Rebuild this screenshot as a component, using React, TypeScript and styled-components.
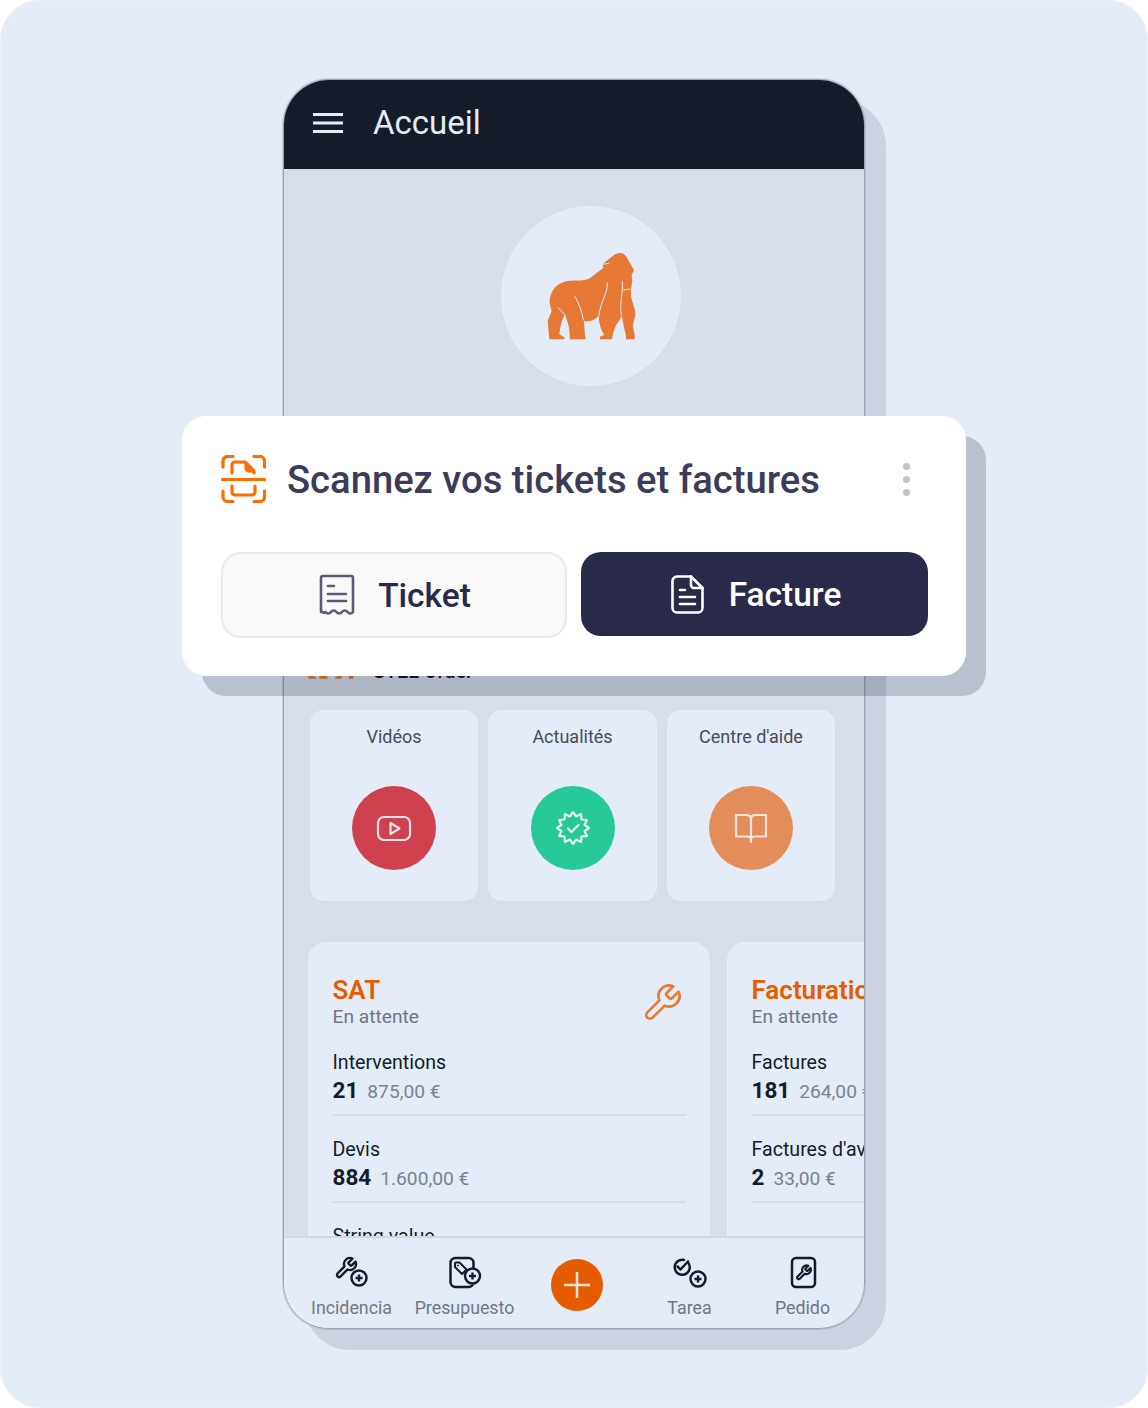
import React from "react";
import styled, { createGlobalStyle } from "styled-components";

const Global = createGlobalStyle`
  html, body { margin: 0; padding: 0; background: #ffffff; }
  * { box-sizing: border-box; }
  body { font-family: Roboto, "Liberation Sans", sans-serif; }
`;

const Canvas = styled.div`
  position: relative;
  width: 1148px;
  height: 1408px;
  padding: 79px 0 0 283px;
  background: #e4ecf7;
  border-radius: 40px;
  box-shadow: inset 0 0 0 1px #edf0f4;
  overflow: hidden;
`;

const Phone = styled.div`
  display: flex;
  flex-direction: column;
  width: 582px;
  height: 1250px;
  background: #d7dee9;
  border: 1px solid #9ca4b3;
  border-radius: 46px;
  box-shadow: 0 0 0 1px rgba(156, 164, 179, 0.4), 21px 21px 0 0 #cbd3e0;
  overflow: hidden;
`;

const Header = styled.header`
  flex: none;
  display: flex;
  align-items: center;
  gap: 30px;
  height: 89px;
  padding: 0 0 4px 29px;
  background: #151c29;
  color: #e4ecf7;
  font-size: 33px;
`;

const Body = styled.main`
  flex: 1;
  min-height: 0;
  padding-top: 37px;
  overflow: hidden;
`;

const Avatar = styled.div`
  display: flex;
  align-items: center;
  justify-content: center;
  width: 180px;
  height: 180px;
  margin-left: 217px;
  border-radius: 50%;
  background: #e4ecf7;
`;

const BrandRow = styled.div`
  display: flex;
  align-items: flex-end;
  gap: 11px;
  height: 60px;
  margin-top: 236px;
  padding-left: 15px;
  font-size: 19.8px;
  font-weight: 500;
  color: #10151f;
  line-height: 1;
`;

const BrandMark = styled.div`
  margin-bottom: -7px;
`;

const BrandName = styled.span`
  margin-bottom: 0;
`;

const Tiles = styled.div`
  display: grid;
  grid-template-columns: 168px 169px 168px;
  gap: 10px;
  margin: 28px 0 0 26px;
`;

const Tile = styled.div`
  display: flex;
  flex-direction: column;
  align-items: center;
  height: 191px;
  padding-top: 16px;
  background: #e4ecf7;
  border-radius: 14px;
  color: #454c5a;
  font-size: 18px;
  line-height: 22px;
`;

const TileCircle = styled.div<{ $color: string }>`
  display: flex;
  align-items: center;
  justify-content: center;
  width: 84px;
  height: 84px;
  margin-top: 38px;
  border-radius: 50%;
  background: ${(p) => p.$color};
`;

const Cards = styled.div`
  display: flex;
  gap: 17px;
  margin: 41px 0 0 24px;
`;

const Card = styled.section`
  flex: none;
  width: 402px;
  height: 400px;
  padding: 33px 24px 0 24.5px;
  background: #e4ecf7;
  border-radius: 18px;
`;

const CardTop = styled.div`
  display: flex;
  justify-content: space-between;
  height: 53px;
  padding-right: 3px;
`;

const CardIcon = styled.div`
  margin-top: 7px;
`;

const CardTitle = styled.div`
  color: #e55c00;
  font-size: 26px;
  font-weight: 600;
  line-height: 30px;
`;

const CardSub = styled.div`
  margin-top: 1px;
  color: #6f7785;
  font-size: 19.2px;
  line-height: 22px;
`;

const MetricList = styled.div`
  margin-top: 1px;
`;

const Metric = styled.div`
  height: 87px;
  padding-top: 22px;
  border-bottom: 2px solid #d7dee9;
`;

const MetricName = styled.div`
  color: #151c29;
  font-size: 19.6px;
  font-weight: 450;
  line-height: 24px;
`;

const MetricValues = styled.div`
  display: flex;
  align-items: baseline;
  gap: 9px;
  margin-top: 0;
`;

const Count = styled.span`
  color: #151c29;
  font-size: 22.5px;
  font-weight: 700;
  line-height: 30px;
`;

const Amount = styled.span`
  color: #7b8391;
  font-size: 19.2px;
  line-height: 24px;
  white-space: nowrap;
`;

const Nav = styled.nav`
  flex: none;
  display: grid;
  grid-template-columns: 113px 113px 112px 113px 113px;
  align-items: start;
  height: 92px;
  padding-left: 11px;
  background: #e4ecf7;
  border-top: 2px solid #d0d8e4;
`;

const NavItem = styled.div`
  display: flex;
  flex-direction: column;
  align-items: center;
  padding-top: 18px;
  color: #6f7785;
  font-size: 17.8px;
  line-height: 22px;
  white-space: nowrap;
`;

const NavIcon = styled.div`
  height: 33px;
  margin-bottom: 8px;
`;

const AddButton = styled.div`
  display: flex;
  align-items: center;
  justify-content: center;
  width: 52px;
  height: 52px;
  margin: 21px 0 0 30px;
  border-radius: 50%;
  background: #e55c00;
`;

const Overlay = styled.section`
  position: absolute;
  left: 182px;
  top: 416px;
  width: 784px;
  height: 260px;
  padding: 39px 38px 0 39px;
  background: #ffffff;
  border-radius: 24px;
  box-shadow: 20px 20px 0 rgba(16, 26, 48, 0.2);
`;

const OverlayHead = styled.div`
  display: flex;
  align-items: center;
  gap: 21px;
  height: 48px;
`;

const OverlayTitle = styled.h2`
  flex: 1;
  margin: 0;
  padding-top: 1px;
  color: #3c3c5a;
  font-size: 38.2px;
  font-weight: 500;
  line-height: 48px;
  white-space: nowrap;
`;

const Dots = styled.div`
  display: flex;
  flex-direction: column;
  gap: 6px;
  margin-right: 18px;
`;

const Dot = styled.span`
  width: 7px;
  height: 7px;
  border-radius: 50%;
  background: #c4c4c4;
`;

const Buttons = styled.div`
  display: grid;
  grid-template-columns: 346px 347px;
  gap: 14px;
  margin-top: 49px;
`;

const ActionButton = styled.div<{ $primary?: boolean }>`
  display: flex;
  align-items: center;
  justify-content: center;
  gap: ${(p) => (p.$primary ? "25px" : "23px")};
  height: ${(p) => (p.$primary ? "84px" : "86px")};
  padding-left: ${(p) => (p.$primary ? "3px" : "2px")};
  background: ${(p) => (p.$primary ? "#29294a" : "#f9f9f9")};
  border: ${(p) => (p.$primary ? "none" : "2px solid #e8e8ee")};
  border-radius: 20px;
  color: ${(p) => (p.$primary ? "#ffffff" : "#29294a")};
  font-size: 33.5px;
  font-weight: 500;
`;

const Gorilla = ({ width, height }: { width: number; height: number }) => (
  <svg width={width} height={height} viewBox="3 3 360 330" aria-hidden>
    <path
      fill="#e57935"
      d="M218 72 L248 48 C258 40 272 35 282 43 C292 52 303 76 312 90 L305 105 L307 122 L303 146 L303 170 C306 185 316 205 316 222 C316 235 309 245 309 258 L314 285 L314 298 L288 298 L288 288 L282 262 L275 226 L268 240 C258 255 250 270 246 298 L210 298 L210 290 L222 285 C212 265 205 248 207 226 C198 238 182 247 162 243 L165 290 L168 298 L120 298 L117 262 L105 222 C96 238 90 258 88 283 L103 292 L103 298 L58 298 L53 243 L65 212 L59 190 C58 150 85 124 120 122 C150 121 170 124 188 108 L220 84 Z"
    />
    <path
      fill="none"
      stroke="#e4ecf7"
      strokeWidth="3"
      strokeLinecap="round"
      d="M135 170 C148 192 156 215 160 240 M232 128 C233 165 212 180 207 226 M277 125 C280 160 268 185 274 224 M281 150 L300 147 M218 73 L236 70 M84 203 L105 224"
    />
  </svg>
);

const Menu = () => (
  <svg width="30" height="20" viewBox="0 0 30 20" aria-hidden>
    <path d="M0 1.5H30M0 10H30M0 18.5H30" stroke="#e4ecf7" strokeWidth="3" />
  </svg>
);

const ScanIcon = () => (
  <svg width="45" height="48" viewBox="0 0 45 48" fill="none" stroke="#ff6c00" strokeWidth="3.2" strokeLinecap="round" strokeLinejoin="round" aria-hidden style={{ flex: "none" }}>
    <path d="M2 12V6a4.500 4.500 0 0 1 4.500-4.500H12M33 1.500h6A4.500 4.500 0 0 1 43.500 6v6M2 36v6a4.500 4.500 0 0 0 4.500 4.500H12M33 46.500h6a4.500 4.500 0 0 0 4.500-4.500v-6" />
    <path d="M1.500 24.500h42" />
    <path d="M11 18v-8a3 3 0 0 1 3-3h10l9 9v2" />
    <path d="M25 9v4a3 3 0 0 0 3 3h4z" fill="#ff6c00" />
    <path d="M11 31v6a3 3 0 0 0 3 3h17a3 3 0 0 0 3-3v-6" />
  </svg>
);

const TicketIcon = () => (
  <svg width="36" height="42" viewBox="0 0 36 42" fill="none" stroke="#5b5b78" strokeWidth="2.600" strokeLinecap="round" strokeLinejoin="round" aria-hidden>
    <path d="M2 38V4a2 2 0 0 1 2-2h28a2 2 0 0 1 2 2v34c-1.500 2-4 2-5.500 0s-4-2-5.500 0-4 2-5.500 0-4-2-5.500 0-4 2-5.500 0c-1 1.200-2 1.300-2.500 0z" />
    <path d="M9 12h6M9 20h18M9 27h18" />
  </svg>
);

const InvoiceIcon = () => (
  <svg width="33" height="39" viewBox="0 0 33 39" fill="none" stroke="#ffffff" strokeWidth="2.600" strokeLinecap="round" strokeLinejoin="round" aria-hidden>
    <path d="M20 1.500H6A4.500 4.500 0 0 0 1.500 6v27A4.500 4.500 0 0 0 6 37.500h21a4.500 4.500 0 0 0 4.500-4.500V13z" />
    <path d="M20 1.500V10a3 3 0 0 0 3 3h8.500" />
    <path d="M9 15h5M9 22h15M9 29h15" />
  </svg>
);

const VideoIcon = () => (
  <svg width="36" height="28" viewBox="0 0 36 28" fill="none" stroke="#f0e4e6" strokeWidth="2.200" strokeLinejoin="round" aria-hidden>
    <rect x="2" y="3" width="32" height="23" rx="6" />
    <path d="M14.500 9 23.500 14.500 14.500 20z" />
  </svg>
);

const starPoints = Array.from({ length: 24 }, (_, i) => {
  const r = i % 2 ? 12 : 16;
  const a = (i * Math.PI) / 12 - Math.PI / 2;
  return `${(17 + r * Math.cos(a)).toFixed(1)},${(17 + r * Math.sin(a)).toFixed(1)}`;
}).join(" ");

const BadgeIcon = () => (
  <svg width="34" height="34" viewBox="0 0 34 34" fill="none" stroke="#e6f4ef" strokeWidth="2.200" strokeLinejoin="round" strokeLinecap="round" aria-hidden>
    <polygon points={starPoints} />
    <path d="M12 17.500l3.500 3.500 7-7" />
  </svg>
);

const BookIcon = () => (
  <svg width="34" height="32" viewBox="0 0 34 32" fill="none" stroke="#f4e6dc" strokeWidth="2.200" strokeLinejoin="round" aria-hidden>
    <path d="M2 3h10c3 0 5 1.500 5 4v20c0-1.500-2-2.500-4-2.500H2zM32 3H22c-3 0-5 1.500-5 4v20c0-1.500 2-2.500 4-2.500h11z" />
    <path d="M17 25v5" strokeLinecap="round" />
  </svg>
);

const wrench =
  "M14.7 6.3a1 1 0 0 0 0 1.4l1.6 1.6a1 1 0 0 0 1.400 0l3.770-3.770a6 6 0 0 1-7.940 7.940l-6.910 6.910a2.120 2.120 0 0 1-3-3l6.910-6.910a6 6 0 0 1 7.940-7.940l-3.760 3.760z";

const WrenchOutline = () => (
  <svg width="42" height="42" viewBox="0 0 24 24" fill="none" stroke="#e57935" strokeWidth="1.500" strokeLinecap="round" strokeLinejoin="round" aria-hidden>
    <path d={wrench} />
  </svg>
);

const PlusBadge = ({ cx, cy }: { cx: number; cy: number }) => (
  <g>
    <circle cx={cx} cy={cy} r="7.500" fill="#e4ecf7" stroke="#151c29" strokeWidth="2.500" />
    <path d={`M${cx - 3.500} ${cy}h7M${cx} ${cy - 3.500}v7`} stroke="#151c29" strokeWidth="2.400" />
  </g>
);

const IncidentIcon = () => (
  <svg width="40" height="33" viewBox="0 0 40 33" fill="none" aria-hidden>
    <g transform="translate(2 0)">
      <path d={wrench} stroke="#151c29" strokeWidth="2.400" strokeLinejoin="round" />
    </g>
    <PlusBadge cx={27} cy={22} />
  </svg>
);

const QuoteIcon = () => (
  <svg width="40" height="33" viewBox="0 0 40 33" fill="none" stroke="#151c29" strokeWidth="2.500" strokeLinejoin="round" aria-hidden>
    <rect x="5.500" y="2" width="23" height="29" rx="5" />
    <path d="M10 11V7.500a1 1 0 0 1 1-1h3.500l7 7-4.500 4.500z" strokeWidth="2" />
    <circle cx="13" cy="9.500" r="0.600" fill="#151c29" strokeWidth="1" />
    <PlusBadge cx={27.500} cy={20} />
  </svg>
);

const TaskIcon = () => (
  <svg width="40" height="33" viewBox="0 0 40 33" fill="none" aria-hidden>
    <g transform="translate(-1 0)">
      <path d="M19 6.500A7.500 7.500 0 1 1 15 4" stroke="#151c29" strokeWidth="2.500" strokeLinecap="round" />
      <path d="M8.500 10.500l3 3 7.500-8" stroke="#151c29" strokeWidth="2.500" strokeLinecap="round" strokeLinejoin="round" />
    </g>
    <PlusBadge cx={28} cy={23} />
  </svg>
);

const OrderIcon = () => (
  <svg width="40" height="33" viewBox="0 0 40 33" fill="none" stroke="#151c29" strokeWidth="2.500" strokeLinejoin="round" aria-hidden>
    <rect x="9" y="2" width="23" height="29" rx="4" />
    <g transform="translate(12 8) scale(0.72)">
      <path d={wrench} strokeWidth="3" />
    </g>
  </svg>
);

type Row = { name: string; count: string; amount: string };

const sat: Row[] = [
  { name: "Interventions", count: "21", amount: "875,00 €" },
  { name: "Devis", count: "884", amount: "1.600,00 €" },
  { name: "String value", count: "0", amount: "0,00 €" },
];

const billing: Row[] = [
  { name: "Factures", count: "181", amount: "264,00 €" },
  { name: "Factures d'avoir", count: "2", amount: "33,00 €" },
];

const Metrics = ({ rows }: { rows: Row[] }) => (
  <MetricList>
    {rows.map((r) => (
      <Metric key={r.name}>
        <MetricName>{r.name}</MetricName>
        <MetricValues>
          <Count>{r.count}</Count>
          <Amount>{r.amount}</Amount>
        </MetricValues>
      </Metric>
    ))}
  </MetricList>
);

export default function App() {
  return (
    <Canvas>
      <Global />
      <Phone>
        <Header>
          <Menu />
          <span>Accueil</span>
        </Header>
        <Body>
          <Avatar>
            <Gorilla width={120} height={110} />
          </Avatar>
          <BrandRow>
            <BrandMark>
              <Gorilla width={63} height={58} />
            </BrandMark>
            <BrandName>STEL Order</BrandName>
          </BrandRow>
          <Tiles>
            <Tile>
              Vidéos
              <TileCircle $color="#d0414f">
                <VideoIcon />
              </TileCircle>
            </Tile>
            <Tile>
              Actualités
              <TileCircle $color="#27c998">
                <BadgeIcon />
              </TileCircle>
            </Tile>
            <Tile>
              Centre d'aide
              <TileCircle $color="#e38e5a">
                <BookIcon />
              </TileCircle>
            </Tile>
          </Tiles>
          <Cards>
            <Card>
              <CardTop>
                <div>
                  <CardTitle>SAT</CardTitle>
                  <CardSub>En attente</CardSub>
                </div>
                <CardIcon>
                  <WrenchOutline />
                </CardIcon>
              </CardTop>
              <Metrics rows={sat} />
            </Card>
            <Card>
              <CardTop>
                <div>
                  <CardTitle>Facturation</CardTitle>
                  <CardSub>En attente</CardSub>
                </div>
              </CardTop>
              <Metrics rows={billing} />
            </Card>
          </Cards>
        </Body>
        <Nav>
          <NavItem>
            <NavIcon><IncidentIcon /></NavIcon>
            Incidencia
          </NavItem>
          <NavItem>
            <NavIcon><QuoteIcon /></NavIcon>
            Presupuesto
          </NavItem>
          <AddButton>
            <svg width="26" height="26" viewBox="0 0 26 26" aria-hidden>
              <path d="M13 0V26M0 13H26" stroke="#f4e6dc" strokeWidth="2.500" />
            </svg>
          </AddButton>
          <NavItem>
            <NavIcon><TaskIcon /></NavIcon>
            Tarea
          </NavItem>
          <NavItem>
            <NavIcon><OrderIcon /></NavIcon>
            Pedido
          </NavItem>
        </Nav>
      </Phone>
      <Overlay>
        <OverlayHead>
          <ScanIcon />
          <OverlayTitle>Scannez vos tickets et factures</OverlayTitle>
          <Dots>
            <Dot />
            <Dot />
            <Dot />
          </Dots>
        </OverlayHead>
        <Buttons>
          <ActionButton>
            <TicketIcon />
            Ticket
          </ActionButton>
          <ActionButton $primary>
            <InvoiceIcon />
            Facture
          </ActionButton>
        </Buttons>
      </Overlay>
    </Canvas>
  );
}
